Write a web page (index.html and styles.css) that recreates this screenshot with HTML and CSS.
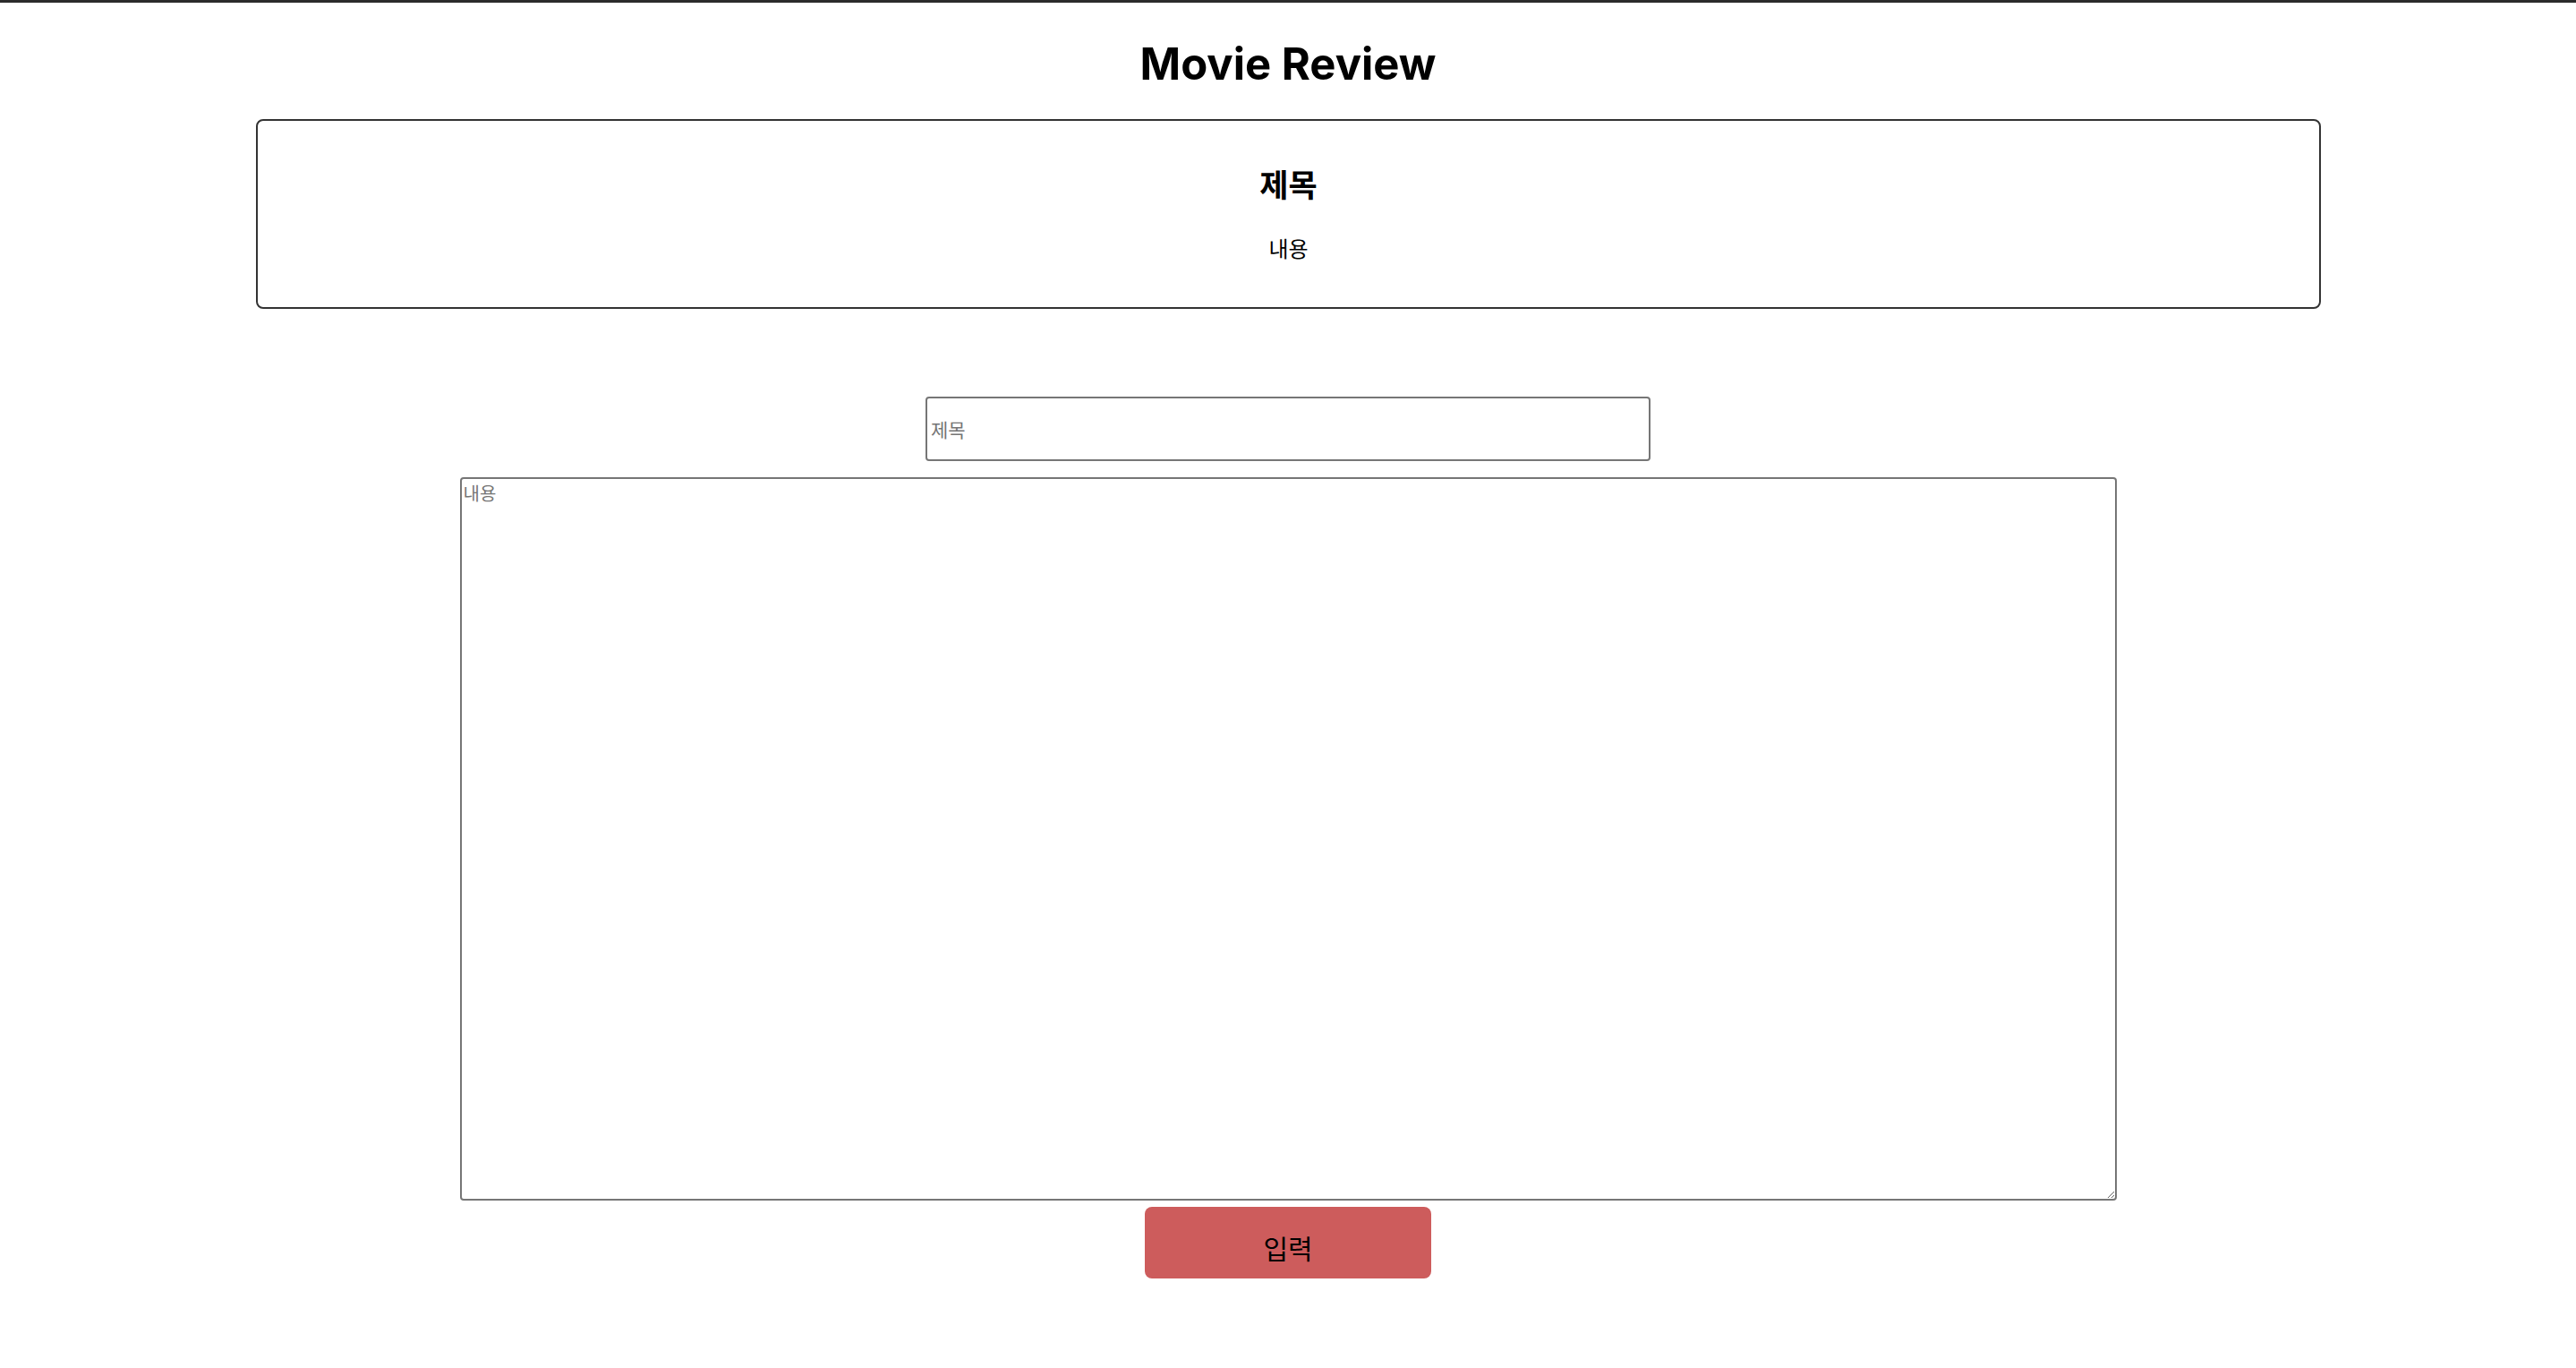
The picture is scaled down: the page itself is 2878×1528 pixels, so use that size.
FILE: index.html
```html
<!DOCTYPE html>
<html lang="ko">
<head>
<meta charset="utf-8">
<title>Movie Review</title>
<link rel="stylesheet" href="styles.css">
</head>
<body>
<div class="topline"></div>
<h1 class="title">Movie Review</h1>
<section class="card">
  <h2 class="card-title">제목</h2>
  <p class="card-body">내용</p>
</section>
<form class="review-form">
  <input class="title-input" type="text" placeholder="제목">
  <textarea class="body-input" placeholder="내용"></textarea>
  <button class="submit" type="button">입력</button>
</form>
</body>
</html>
```

FILE: styles.css
```css
html, body {
  margin: 0;
  padding: 0;
  background: #ffffff;
}
body {
  font-family: "Noto Sans CJK KR", "Noto Sans", sans-serif;
  color: #000;
}
.topline {
  height: 3px;
  background: #2b2b2b;
}
.title {
  font-family: Inter, "Noto Sans CJK KR", sans-serif;
  font-weight: 700;
  font-size: 49px;
  line-height: 60px;
  margin: 39px 0 0;
  text-align: center;
}
.card {
  margin: 31px 285px 0 286px;
  border: 2px solid #333;
  border-radius: 8px;
  padding: 45px 0 49px;
  text-align: center;
}
.card-title {
  font-size: 35px;
  font-weight: 700;
  line-height: 50px;
  margin: 0;
}
.card-body {
  font-size: 24px;
  line-height: 34px;
  margin: 30px 0 0;
}
.review-form {
  margin-top: 98px;
  display: flex;
  flex-direction: column;
  align-items: center;
}
.title-input {
  box-sizing: border-box;
  width: 810px;
  height: 72px;
  border: 2px solid #767676;
  border-radius: 4px;
  padding: 0 4px;
  font-family: "Noto Sans CJK KR", sans-serif;
  font-size: 21px;
  margin: 0;
}
.title-input::placeholder,
.body-input::placeholder {
  color: #757575;
}
.body-input {
  box-sizing: border-box;
  width: 1851px;
  height: 808px;
  margin: 18px 0 0;
  border: 2px solid #767676;
  border-radius: 4px;
  padding: 4px 2px;
  font-family: "Noto Sans CJK KR", sans-serif;
  font-size: 20px;
  line-height: 24px;
}
.submit {
  margin-top: 7px;
  width: 320px;
  height: 80px;
  border: none;
  border-radius: 8px;
  background: #cd5c5c;
  color: #000;
  font-family: "Noto Sans CJK KR", sans-serif;
  font-size: 30px;
  padding: 10px 0 0;
}
```
